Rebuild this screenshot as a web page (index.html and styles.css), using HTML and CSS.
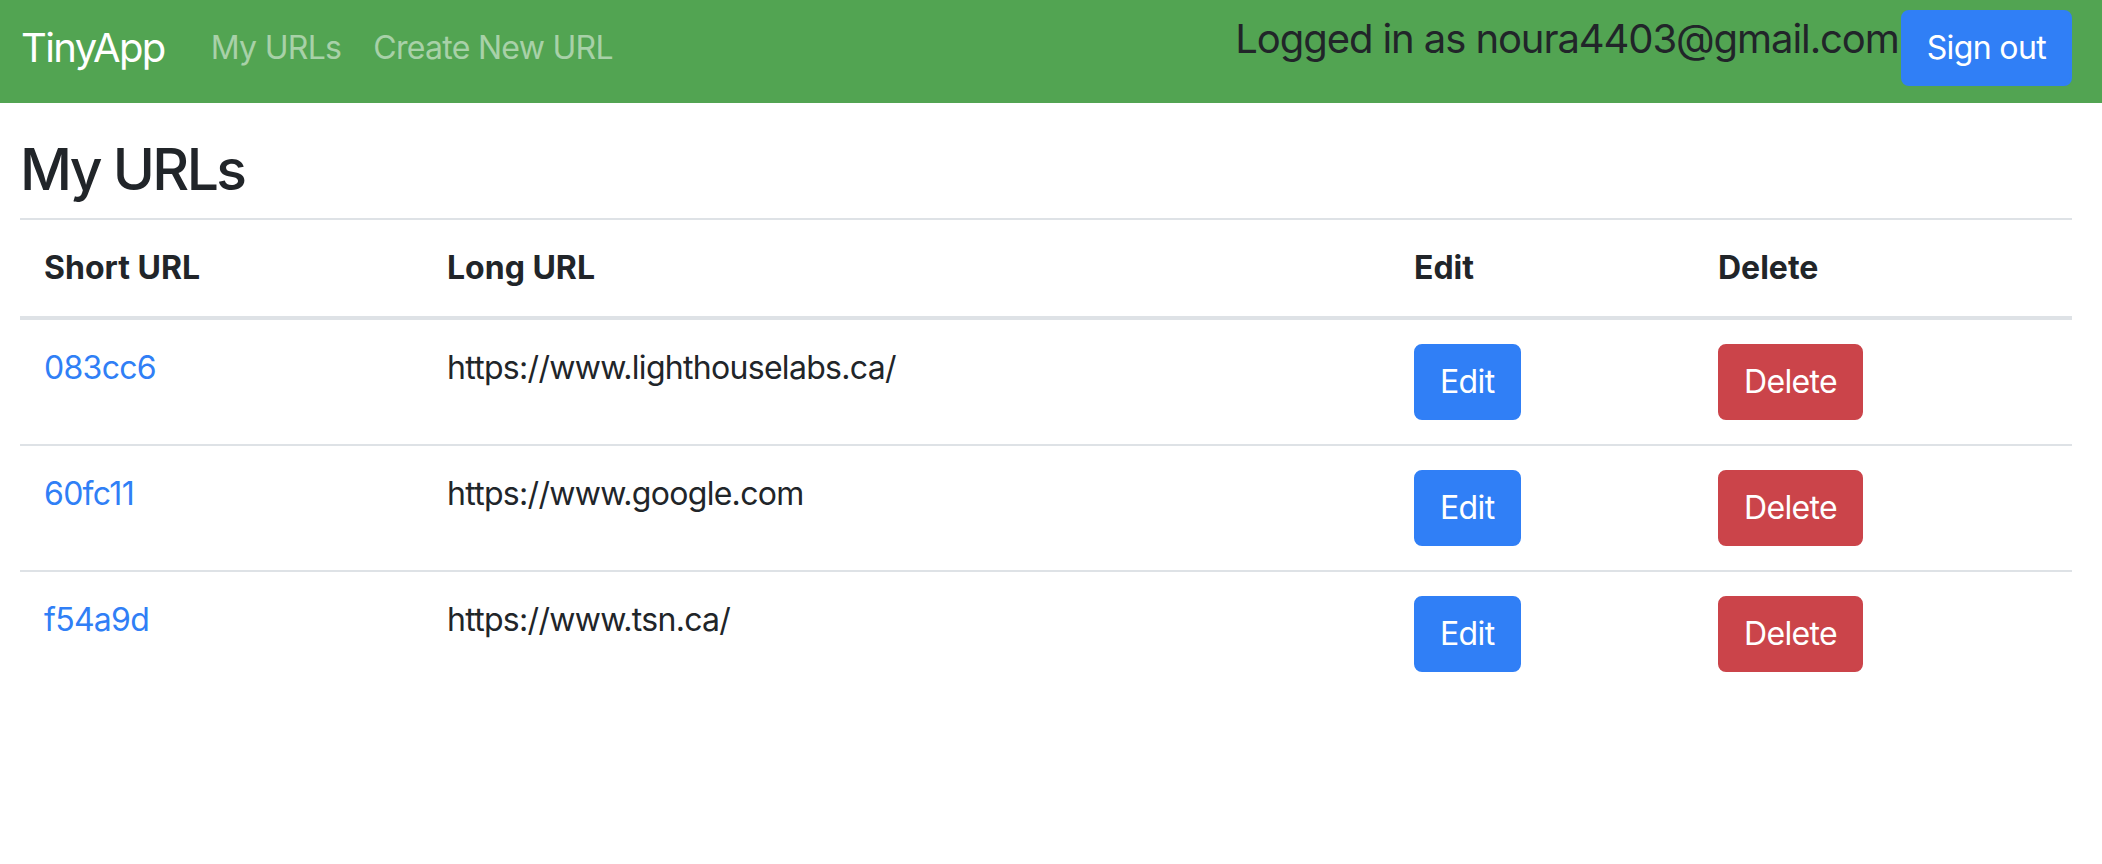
FILE: index.html
```html
<!DOCTYPE html>
<html lang="en">
<head>
<meta charset="utf-8">
<title>TinyApp</title>
<link rel="stylesheet" href="styles.css">
</head>
<body>
<nav class="navbar">
  <div class="nav-left">
    <a class="brand" href="#">TinyApp</a>
    <a class="nav-link nav-link-first" href="#">My URLs</a>
    <a class="nav-link" href="#">Create New URL</a>
  </div>
  <div class="nav-right">
    <span class="user">Logged in as noura4403@gmail.com</span>
    <button class="btn btn-primary btn-signout" type="button">Sign out</button>
  </div>
</nav>
<main class="container">
  <h1 class="title">My URLs</h1>
  <table class="url-table">
    <colgroup>
      <col class="col-short">
      <col class="col-long">
      <col class="col-edit">
      <col class="col-delete">
    </colgroup>
    <thead>
      <tr>
        <th>Short URL</th>
        <th>Long URL</th>
        <th>Edit</th>
        <th>Delete</th>
      </tr>
    </thead>
    <tbody>
      <tr>
        <td><a class="short-link" href="#">083cc6</a></td>
        <td>https://www.lighthouselabs.ca/</td>
        <td><button class="btn btn-primary" type="button">Edit</button></td>
        <td><button class="btn btn-danger" type="button">Delete</button></td>
      </tr>
      <tr>
        <td><a class="short-link" href="#">60fc11</a></td>
        <td>https://www.google.com</td>
        <td><button class="btn btn-primary" type="button">Edit</button></td>
        <td><button class="btn btn-danger" type="button">Delete</button></td>
      </tr>
      <tr>
        <td><a class="short-link" href="#">f54a9d</a></td>
        <td>https://www.tsn.ca/</td>
        <td><button class="btn btn-primary" type="button">Edit</button></td>
        <td><button class="btn btn-danger" type="button">Delete</button></td>
      </tr>
    </tbody>
  </table>
</main>
</body>
</html>
```
FILE: styles.css
```css
* { box-sizing: border-box; }
html, body { margin: 0; padding: 0; }
body {
  font-family: Inter, "Noto Sans", sans-serif;
  font-size: 32px;
  line-height: 48px;
  letter-spacing: -0.022em;
  color: #212529;
  background: #fff;
}
a { text-decoration: none; }

.navbar {
  display: flex;
  justify-content: space-between;
  align-items: flex-start;
  height: 103px;
  padding: 0 30px 0 21px;
  background: #52a452;
}
.nav-left { display: flex; align-items: flex-start; }
.brand {
  font-size: 40px;
  line-height: 60px;
  letter-spacing: -0.04em;
  margin-top: 18px;
  color: #fff;
}
.nav-link {
  margin-top: 24px;
  padding: 0 16px;
  color: rgba(255, 255, 255, 0.5);
}
.nav-link-first { margin-left: 30px; }
.nav-right { display: flex; align-items: flex-start; }
.user {
  font-size: 40px;
  line-height: 60px;
  letter-spacing: -0.027em;
  margin-top: 9px;
  color: #212529;
}
.btn-signout { margin-top: 10px; margin-left: 2px; }

.btn {
  display: inline-block;
  font-family: inherit;
  font-size: 32px;
  line-height: 48px;
  letter-spacing: -0.02em;
  padding: 12px 24px;
  border: 2px solid transparent;
  border-radius: 8px;
  color: #fff;
  cursor: pointer;
}
.btn-primary { background: #307ff6; border-color: #307ff6; }
.btn-danger { background: #cb444a; border-color: #cb444a; }

.container { padding: 0 30px 0 20px; }
.title {
  margin: 33px 0 14px;
  font-size: 57px;
  line-height: 68px;
  font-weight: 500;
  letter-spacing: -0.045em;
}
.url-table {
  width: 100%;
  border-collapse: collapse;
}
.col-short { width: 403px; }
.col-long { width: 967px; }
.col-edit { width: 304px; }
.url-table th,
.url-table td {
  padding: 24px;
  text-align: left;
  vertical-align: top;
  border-top: 2px solid #dee2e6;
}
.url-table th {
  font-weight: 700;
  letter-spacing: 0;
  vertical-align: bottom;
  border-bottom: 4px solid #dee2e6;
}
.url-table tbody tr:first-child td { border-top: 0; }
.short-link { color: #307ff6; }
```
